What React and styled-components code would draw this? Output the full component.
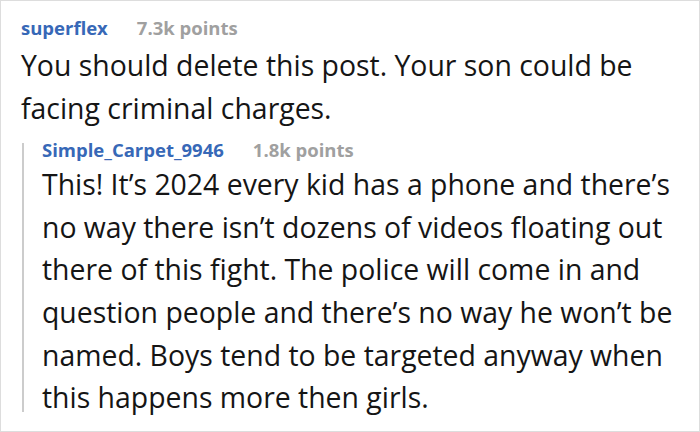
import React from "react"
import styled, { createGlobalStyle } from "styled-components"

const GlobalStyle = createGlobalStyle`
  html, body {
    margin: 0;
    padding: 0;
    background: #ffffff;
  }
`

const Frame = styled.div`
  box-sizing: border-box;
  width: 700px;
  height: 432px;
  border: 1px solid #dddddd;
  background: #ffffff;
  padding: 20px 20px 0 20px;
  font-family: "Open Sans", "Noto Sans", sans-serif;
  overflow: hidden;
`

const Comment = styled.div`
  display: flex;
  flex-direction: column;
`

const Meta = styled.div`
  display: flex;
  align-items: baseline;
  gap: 29px;
  font-size: 18.5px;
  font-weight: 700;
  line-height: 14px;
`

const User = styled.span`
  color: #3768b7;
`

const Points = styled.span`
  color: #a0a0a0;
`

const Body = styled.p`
  margin: ${p => (p.nested ? "6px 0 -7px" : "9px 0 0")};
  font-size: 28.4px;
  line-height: 1.5;
  color: #151515;
`

const Reply = styled.div`
  margin: 14px 0 0 1px;
  border-left: 2px solid #cccccc;
  padding-left: 18px;
  display: flex;
  flex-direction: column;
`

export default function App() {
  return (
    <>
      <GlobalStyle />
      <Frame>
        <Comment>
          <Meta>
            <User>superflex</User>
            <Points>7.3k points</Points>
          </Meta>
          <Body>
            You should delete this post. Your son could be facing criminal
            charges.
          </Body>
        </Comment>
        <Reply>
          <Meta>
            <User>Simple_Carpet_9946</User>
            <Points>1.8k points</Points>
          </Meta>
          <Body nested>
            This! It’s 2024 every kid has a phone and there’s no way there
            isn’t dozens of videos floating out there of this fight. The
            police will come in and question people and there’s no way he
            won’t be named. Boys tend to be targeted anyway when this happens
            more then girls.
          </Body>
        </Reply>
      </Frame>
    </>
  )
}
